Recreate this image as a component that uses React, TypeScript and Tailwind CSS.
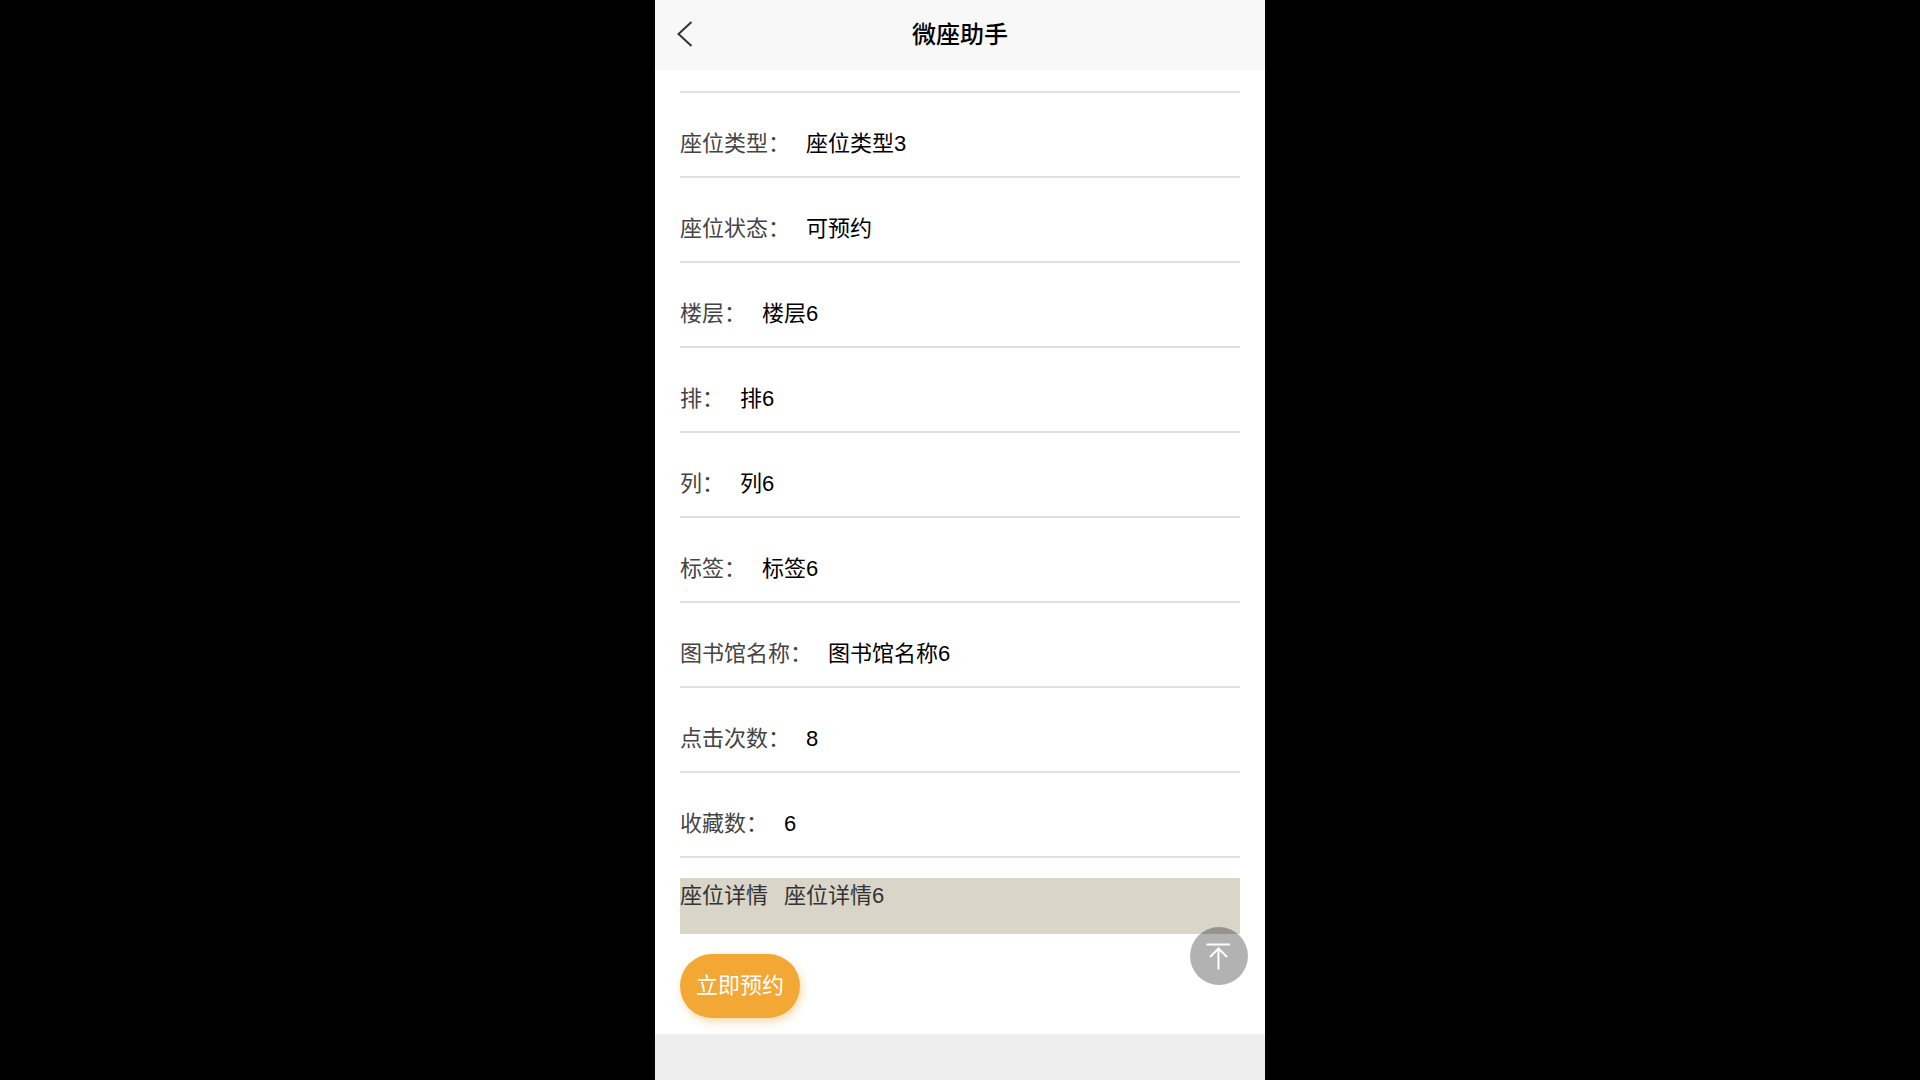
type Field = {
  label: string;
  value: string;
};

const fields: Field[] = [
  { label: '座位类型', value: '座位类型3' },
  { label: '座位状态', value: '可预约' },
  { label: '楼层', value: '楼层6' },
  { label: '排', value: '排6' },
  { label: '列', value: '列6' },
  { label: '标签', value: '标签6' },
  { label: '图书馆名称', value: '图书馆名称6' },
  { label: '点击次数', value: '8' },
  { label: '收藏数', value: '6' },
];

const Header = () => (
  <header className="grid grid-cols-[1fr_auto_1fr] items-center h-[70px] shrink-0 px-[22px] bg-[#f8f8f8]">
    <button type="button" aria-label="返回" className="w-4 text-[#333]">
      <svg width="16" height="28" viewBox="0 0 16 28" fill="none" stroke="currentColor" strokeWidth="2">
        <path d="M14.5 1L1.5 13L14.5 25" />
      </svg>
    </button>
    <h1 className="text-[24px] leading-8 font-medium text-black">微座助手</h1>
  </header>
);

const FieldRow = ({ label, value }: Field) => (
  <div className="flex items-end gap-4 h-[85px] pb-4 border-b-2 border-[#e0e0e0]">
    <dt className="text-[#444]">{label}：</dt>
    <dd className="text-black">{value}</dd>
  </div>
);

const App = () => {
  const scrollToTop = () => window.scrollTo({ top: 0, behavior: 'smooth' });

  return (
    <div className="min-h-screen flex justify-center bg-black">
      <div className="relative flex flex-col w-full max-w-[610px] bg-[#eee] font-['Liberation_Sans','Noto_Sans_CJK_SC',sans-serif] text-[22px] leading-8">
        <Header />

        <main className="px-[25px] pt-[21px] pb-4 bg-white">
          <dl className="border-t-2 border-[#e0e0e0]">
            {fields.map((field) => (
              <FieldRow key={field.label} {...field} />
            ))}
          </dl>

          {/* Seat description */}
          <section className="flex gap-4 h-14 mt-5 pt-0.5 bg-[#d9d5c9] text-[#333]">
            <span>座位详情</span>
            <span>座位详情6</span>
          </section>

          <button
            type="button"
            className="mt-5 h-16 px-4 rounded-full bg-[#f3a735] text-white shadow-[2px_4px_8px_#f3a73566]"
          >
            立即预约
          </button>
        </main>

        {/* Back to top */}
        <button
          type="button"
          aria-label="回到顶部"
          onClick={scrollToTop}
          className="absolute right-[17px] bottom-[95px] flex items-center justify-center size-[58px] rounded-full bg-black/30 text-white"
        >
          <svg width="26" height="28" viewBox="0 0 26 28" fill="none" stroke="currentColor" strokeWidth="2">
            <path d="M0.5 2.5H24M12.5 27.5V6M4 15L12.5 6.5L21 15" />
          </svg>
        </button>
      </div>
    </div>
  );
};

export default App;
